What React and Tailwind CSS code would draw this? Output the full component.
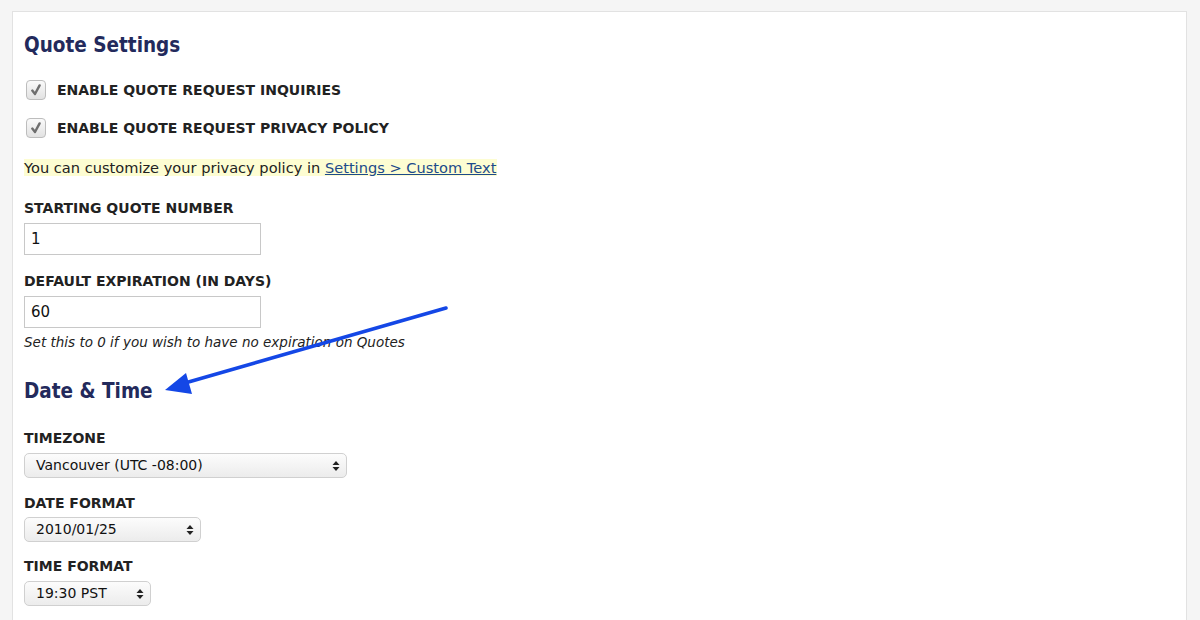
import React from "react";

const font = { fontFamily: '"DejaVu Sans", Verdana, sans-serif' };
const headFont = { fontFamily: '"DejaVu Sans Condensed", "DejaVu Sans", Tahoma, sans-serif' };

function Check({ label }) {
    return (
        <label className="flex items-center h-[20px] gap-[11px]">
            <span className="ml-[2px] w-[20px] h-[20px] rounded-[4px] border border-[#bdbdbd] bg-gradient-to-b from-[#fafafa] to-[#e2e2e2] flex items-center justify-center">
                <svg width="12" height="12" viewBox="0 0 12 12">
                    <path d="M2.3 6.6 L5 10 L9.6 1.4" fill="none" stroke="#6e6e6e" strokeWidth="2.4" strokeLinecap="round" strokeLinejoin="round" />
                </svg>
            </span>
            <span className="text-[14px] font-bold text-[#222]">{label}</span>
        </label>
    );
}

function Label({ children, className = "" }) {
    return <div className={"text-[14px] font-bold text-[#222] leading-[20px] " + className}>{children}</div>;
}

function TextBox({ value }) {
    return (
        <div className="w-[237px] h-[32px] border border-[#c8c8c8] flex items-center px-[6px] text-[15px] text-[#111]">
            {value}
        </div>
    );
}

function Select({ value, width }) {
    return (
        <div
            className="h-[25px] rounded-[5px] border border-[#d0d0d0] bg-gradient-to-b from-[#fcfcfc] to-[#ececec] flex items-center justify-between pl-[11px] pr-[6px] text-[14px] text-[#111]"
            style={{ width }}
        >
            <span>{value}</span>
            <svg width="8" height="12" viewBox="0 0 8 12">
                <path d="M4 1 L7.5 5 L0.5 5 Z M4 11 L7.5 7 L0.5 7 Z" fill="#222" />
            </svg>
        </div>
    );
}

export default function App() {
    return (
        <div className="relative w-[1200px] h-[620px] overflow-hidden bg-[#f5f5f5]" style={font}>
            <div className="ml-[12px] mt-[11px] w-[1175px] h-[640px] bg-white border border-[#e2e2e2] pl-[11px] pt-[19px]">
                <h2 className="text-[20.5px] font-bold text-[#232a5c] leading-[28px]" style={headFont}>Quote Settings</h2>

                <div className="mt-[21px] flex flex-col gap-[18px]">
                    <Check label="ENABLE QUOTE REQUEST INQUIRIES" />
                    <Check label="ENABLE QUOTE REQUEST PRIVACY POLICY" />
                </div>

                <p className="mt-[20px] text-[14.6px] text-[#222] leading-[20px]">
                    <span className="bg-[#fdfdd2] pr-[1px]">
                        You can customize your privacy policy in{" "}
                        <a href="#" className="text-[#1c4a8a] underline">Settings &gt; Custom Text</a>
                    </span>
                </p>

                <Label className="mt-[20px]">STARTING QUOTE NUMBER</Label>
                <div className="mt-[5px]"><TextBox value="1" /></div>

                <Label className="mt-[16px]">DEFAULT EXPIRATION (IN DAYS)</Label>
                <div className="mt-[5px]"><TextBox value="60" /></div>
                <p className="mt-[5px] text-[13.5px] italic text-[#222] leading-[18px]">
                    Set this to 0 if you wish to have no expiration on Quotes
                </p>

                <h2 className="mt-[26px] text-[20.5px] font-bold text-[#232a5c] leading-[28px]" style={headFont}>Date &amp; Time</h2>

                <Label className="mt-[23px]">TIMEZONE</Label>
                <div className="mt-[5px]"><Select value="Vancouver (UTC -08:00)" width={323} /></div>

                <Label className="mt-[15px]">DATE FORMAT</Label>
                <div className="mt-[4px]"><Select value="2010/01/25" width={177} /></div>

                <Label className="mt-[14px]">TIME FORMAT</Label>
                <div className="mt-[5px]"><Select value="19:30 PST" width={127} /></div>
            </div>

            {/* annotation arrow */}
            <svg className="absolute left-0 top-0 pointer-events-none" width="1200" height="620">
                <line x1="446" y1="308" x2="185" y2="383" stroke="#1447e6" strokeWidth="3.5" strokeLinecap="round" />
                <path d="M165 390 L186 373 L192 394 Z" fill="#1447e6" />
            </svg>
        </div>
    );
}
